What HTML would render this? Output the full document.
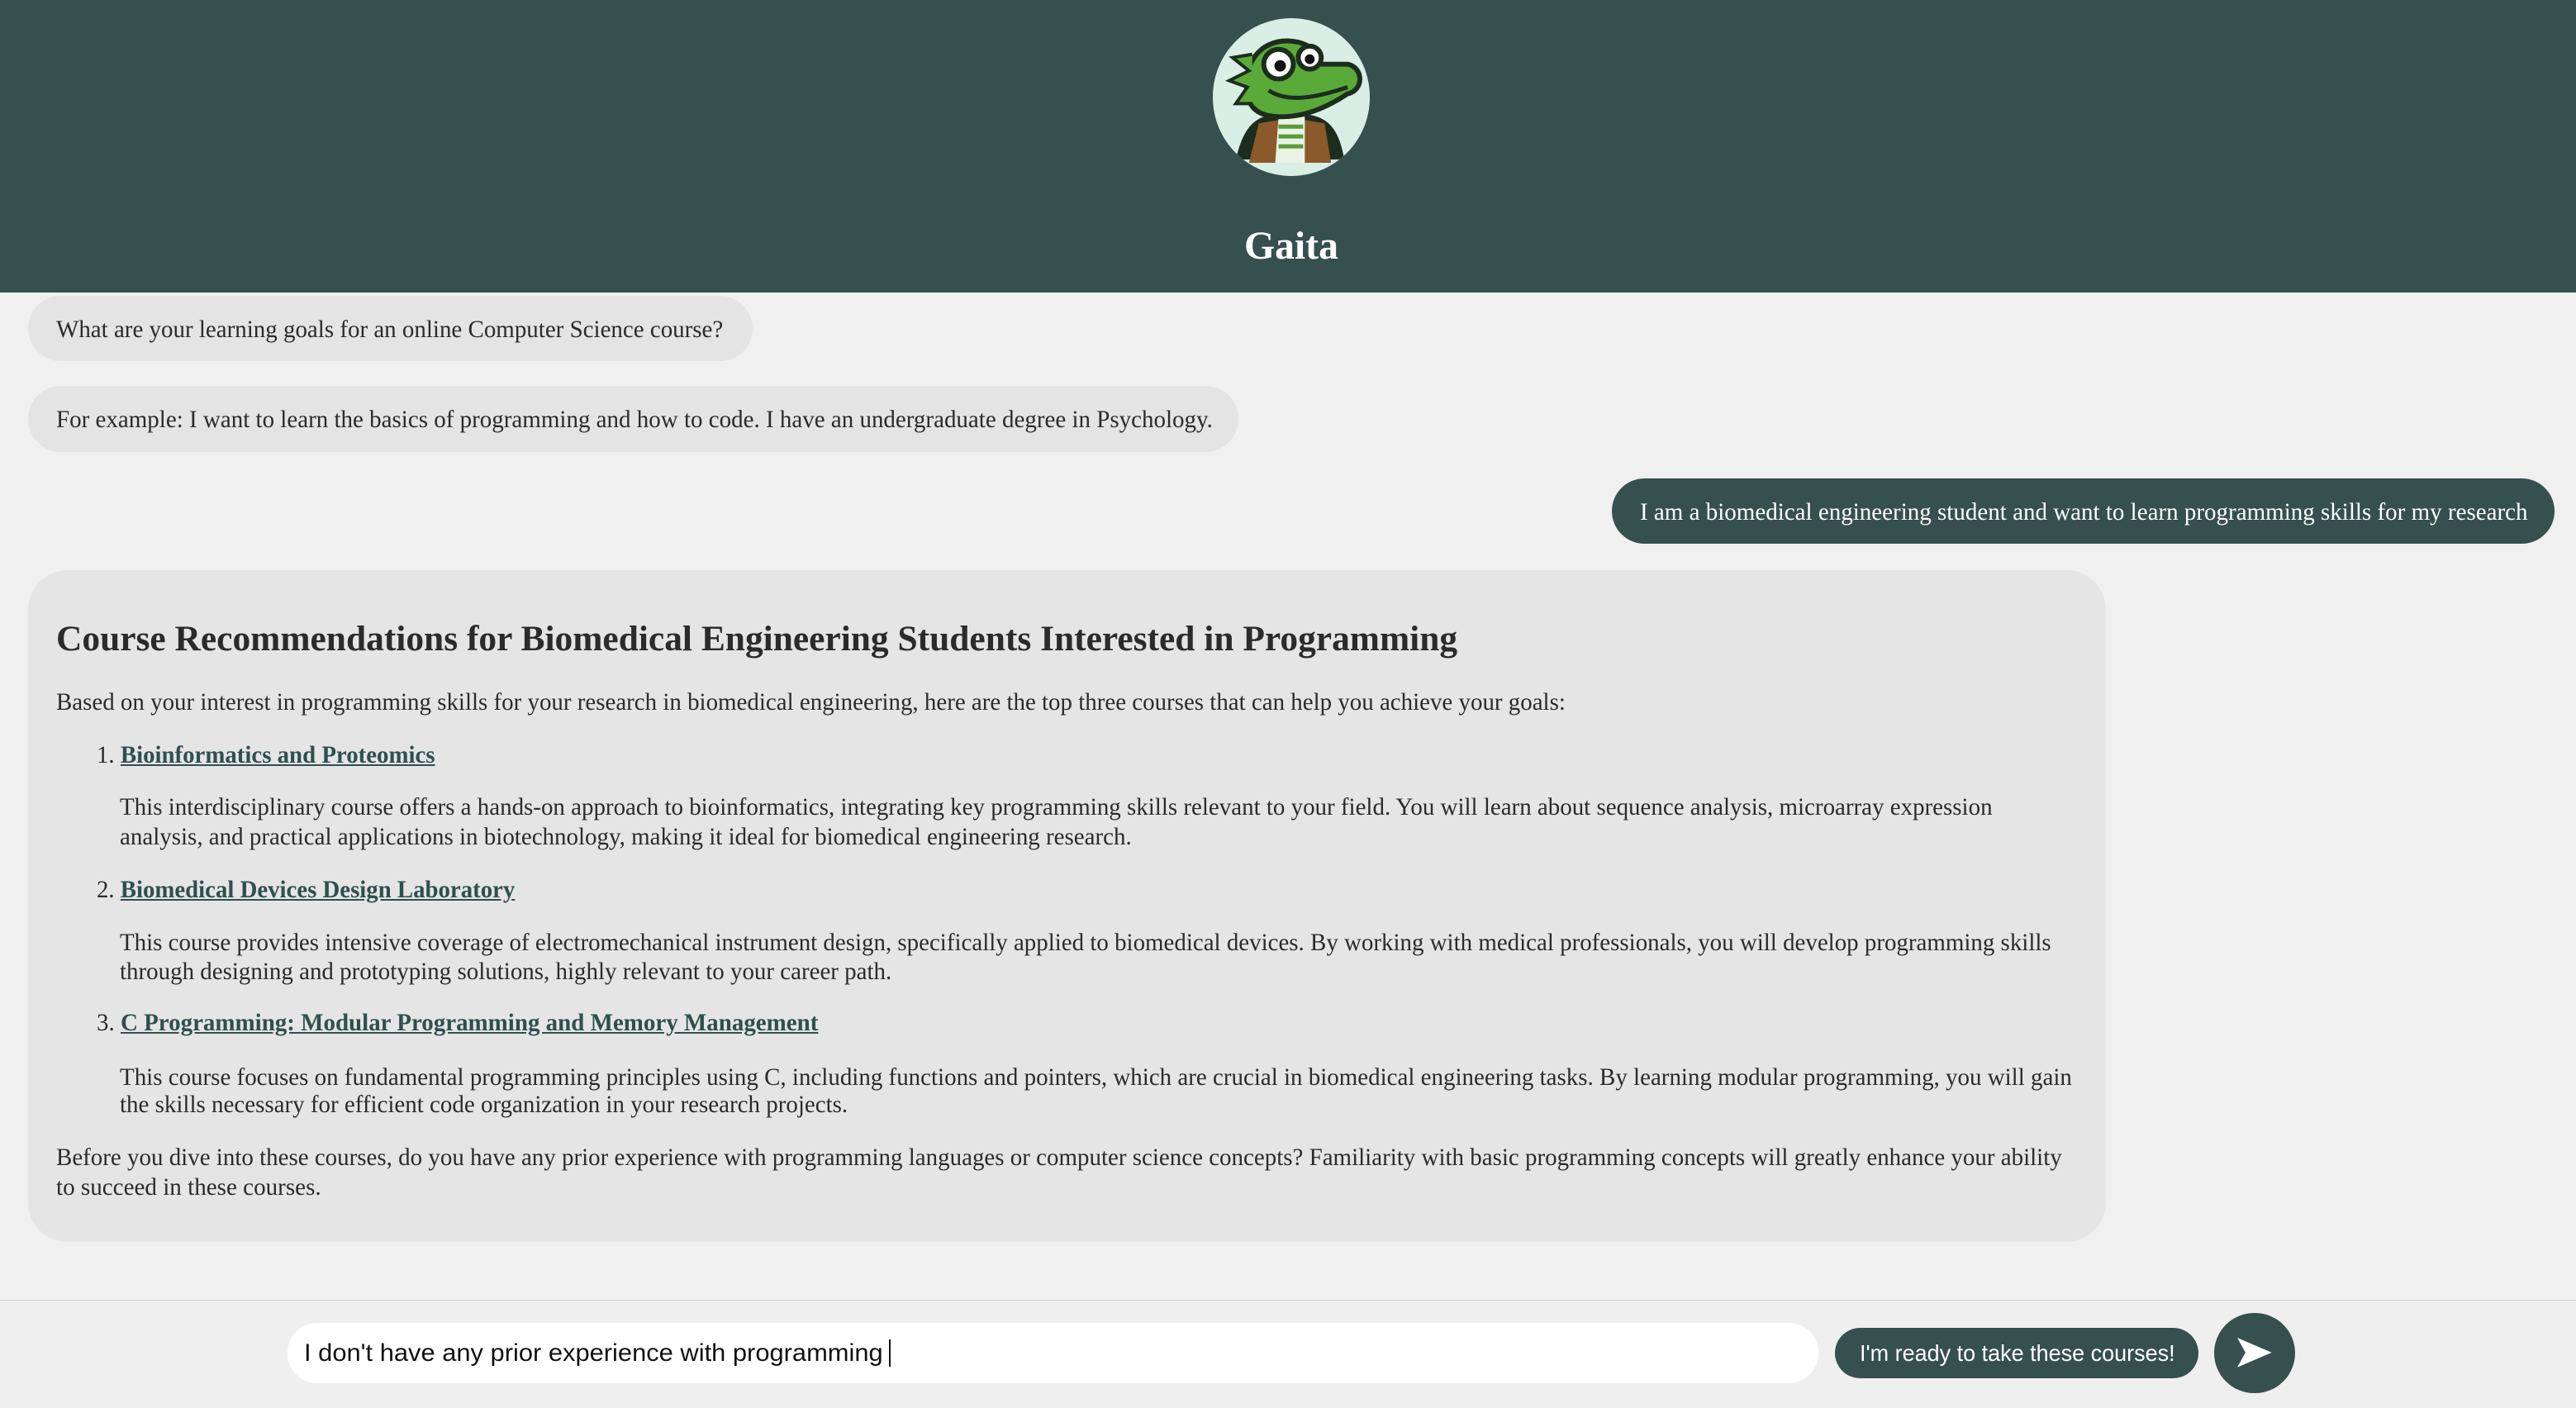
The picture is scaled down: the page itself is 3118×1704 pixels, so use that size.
<!DOCTYPE html>
<html><head><meta charset="utf-8">
<style>
html,body{margin:0;padding:0;background:#f0f0f0;overflow:hidden;width:3118px;height:1704px}
#w{zoom:1.9885;width:1568px;height:857px;position:relative;font-family:"Liberation Serif","Times New Roman",serif;color:#2b2b2b}
.hdr{position:absolute;left:0;top:0;width:1568px;height:178px;background:#364f4f}
.logo{position:absolute;left:738px;top:11px;width:96px;height:96px;border-radius:50%;background:#d9eee5;overflow:hidden}
.title{position:absolute;left:0;width:1572px;top:136px;text-align:center;color:#fff;font-weight:bold;font-size:24px}
.b{position:absolute;background:#e4e4e4;border-radius:20px;height:40px;box-sizing:border-box}
.fit{position:absolute;white-space:nowrap;transform-origin:0 50%;font-size:15px;line-height:17.5px}
.card{position:absolute;left:17px;top:347px;width:1265px;height:409px;background:#e5e5e5;border-radius:24px}
a{color:#2f4f4f;font-weight:bold;text-decoration:underline}
.foot{position:absolute;left:0;top:791px;width:1568px;height:66px;background:#efefef;border-top:1px solid #cfcfcf}
</style></head><body><div id="w">
<div class="hdr"></div>
<div class="logo"><svg width="96" height="96" viewBox="0 0 96 96">
<path d="M14 86 C20 60 30 58 48 58 C66 58 76 62 80 86 Z" fill="#1d2d1d"/>
<path d="M22 88 L28 64 L40 62 L44 88 Z" fill="#8a5a2b"/>
<path d="M52 88 L56 62 L68 64 L72 88 Z" fill="#8a5a2b"/>
<path d="M38 88 L40 60 L56 60 L56 88 Z" fill="#e8f3e4"/>
<path d="M40 66h15M40 72h15M40 78h15" stroke="#5a9a3a" stroke-width="2.5"/>
<path d="M22 50 C16 30 28 12 48 14 C58 15 64 20 66 28 L82 28 C92 30 92 44 82 46 C70 54 56 60 42 60 C30 60 24 56 22 50 Z" fill="#5aaa3a" stroke="#1d2d1d" stroke-width="3"/>
<path d="M34 44 C46 52 64 48 82 42" stroke="#1d2d1d" stroke-width="2.5" fill="none"/>
<circle cx="40" cy="28" r="9" fill="#fff" stroke="#1d2d1d" stroke-width="3"/>
<circle cx="59" cy="24" r="7" fill="#fff" stroke="#1d2d1d" stroke-width="3"/>
<circle cx="41" cy="29" r="3.5" fill="#111"/><circle cx="59" cy="25" r="3" fill="#111"/>
<path d="M24 22 L12 24 L22 32 L10 38 L21 42 L14 52 L24 52" fill="#5aaa3a" stroke="#1d2d1d" stroke-width="2"/>
</svg></div>
<div class="title">Gaita</div>

<div class="b" style="left:17px;top:180px;width:441px"></div>
<div class="fit" style="left:34px;top:192px" w="406">What are your learning goals for an online Computer Science course?</div>
<div class="b" style="left:17px;top:235px;width:737px"></div>
<div class="fit" style="left:34px;top:247px" w="704">For example: I want to learn the basics of programming and how to code. I have an undergraduate degree in Psychology.</div>
<div class="b" style="left:981px;top:291px;width:574px;background:#364f4f"></div>
<div class="fit" style="left:998px;top:303px;color:#fff" w="540">I am a biomedical engineering student and want to learn programming skills for my research</div>

<div class="card"></div>
<div class="fit" style="left:34px;top:377px;font-size:22px;line-height:24px;font-weight:bold" w="853">Course Recommendations for Biomedical Engineering Students Interested in Programming</div>
<div class="fit" style="left:34px;top:419px" w="919">Based on your interest in programming skills for your research in biomedical engineering, here are the top three courses that can help you achieve your goals:</div>
<div class="fit" style="left:59px;top:451px" w="206">1. <a>Bioinformatics and Proteomics</a></div>
<div class="fit" style="left:73px;top:483px" w="1140">This interdisciplinary course offers a hands-on approach to bioinformatics, integrating key programming skills relevant to your field. You will learn about sequence analysis, microarray expression</div>
<div class="fit" style="left:73px;top:501px" w="616">analysis, and practical applications in biotechnology, making it ideal for biomedical engineering research.</div>
<div class="fit" style="left:59px;top:533px" w="255">2. <a>Biomedical Devices Design Laboratory</a></div>
<div class="fit" style="left:73px;top:565px" w="1176">This course provides intensive coverage of electromechanical instrument design, specifically applied to biomedical devices. By working with medical professionals, you will develop programming skills</div>
<div class="fit" style="left:73px;top:583px" w="470">through designing and prototyping solutions, highly relevant to your career path.</div>
<div class="fit" style="left:59px;top:614px" w="439">3. <a>C Programming: Modular Programming and Memory Management</a></div>
<div class="fit" style="left:73px;top:647px" w="1188">This course focuses on fundamental programming principles using C, including functions and pointers, which are crucial in biomedical engineering tasks. By learning modular programming, you will gain</div>
<div class="fit" style="left:73px;top:664px" w="443">the skills necessary for efficient code organization in your research projects.</div>
<div class="fit" style="left:34px;top:696px" w="1221">Before you dive into these courses, do you have any prior experience with programming languages or computer science concepts? Familiarity with basic programming concepts will greatly enhance your ability</div>
<div class="fit" style="left:34px;top:714px" w="161">to succeed in these courses.</div>

<div class="foot"></div>
<div style="position:absolute;left:175px;top:805px;width:932px;height:37px;background:#fff;border-radius:18px"></div>
<div class="fit" style="left:185px;top:815px;font-family:'Liberation Sans',sans-serif;color:#111" w="352">I don't have any prior experience with programming</div>
<div style="position:absolute;left:541px;top:815px;width:1px;height:17px;background:#111"></div>
<div style="position:absolute;left:1117px;top:808px;width:221px;height:31px;background:#364f4f;border-radius:16px"></div>
<div class="fit" style="left:1132px;top:815px;font-family:'Liberation Sans',sans-serif;color:#fff;font-size:14px" w="192">I'm ready to take these courses!</div>
<div style="position:absolute;left:1348px;top:799px;width:49px;height:49px;background:#364f4f;border-radius:50%"></div>
<svg style="position:absolute;left:1360px;top:813px" width="24" height="20" viewBox="0 0 24 20"><path d="M2 1 L23 10 L2 19 L7 10 Z" fill="#fff"/></svg>
</div>
<script>
document.querySelectorAll('.fit').forEach(function(e){var w=parseFloat(e.getAttribute('w'));var s=e.scrollWidth;if(s>0)e.style.transform='scaleX('+(w/s)+')';});
</script>
</body></html>
